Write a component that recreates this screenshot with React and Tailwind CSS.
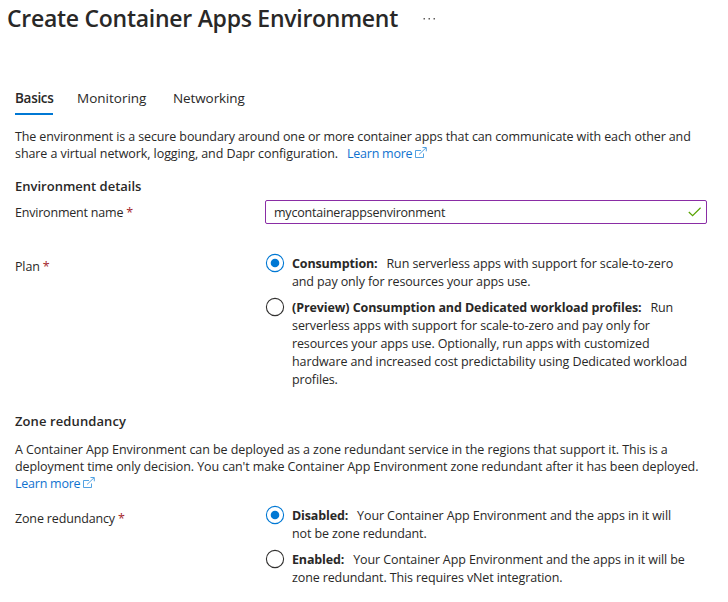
function Lines({ items }) {
  return items.map(([text, tracking]) => (
    <span key={text} className={`block whitespace-nowrap ${tracking}`}>
      {text}
    </span>
  ));
}

function ExternalIcon() {
  return (
    <svg width="12" height="12" viewBox="0 0 12 12" fill="none" stroke="#3f97de" strokeWidth="0.9" className="ml-[3px] inline-block align-[-1px]">
      <path d="M6 3.5H.5v7h8V6.5" />
      <path d="M4 7.5 11 .8M7.5.5h3.8v3.8" />
    </svg>
  );
}

function LearnMore() {
  return (
    <a className="whitespace-nowrap tracking-[-0.24px] text-[#0f72cf]">
      Learn more
      <ExternalIcon />
    </a>
  );
}

function Required({ children, tracking = "tracking-[-0.15px]" }) {
  return (
    <span className={`whitespace-nowrap ${tracking}`}>
      {children} <span className="text-[#a4262c]">*</span>
    </span>
  );
}

function Radio({ checked }) {
  return (
    <svg width="20" height="20" viewBox="0 0 20 20" className="shrink-0" fill="none">
      <circle cx="10" cy="10" r="8.6" stroke={checked ? "#0078d4" : "#323130"} strokeWidth="1.1" />
      {checked && <circle cx="10" cy="10" r="4.3" fill="#0078d4" />}
    </svg>
  );
}

function Option({ checked, title, titleTracking, first, firstTracking, rest = [] }) {
  return (
    <div className="flex gap-[7px]">
      <Radio checked={checked} />
      <div className="pt-0.5 leading-[18px]">
        <div className="whitespace-nowrap">
          <b className={`mr-[9px] font-bold ${titleTracking}`}>{title}</b>
          <span className={firstTracking}>{first}</span>
        </div>
        <Lines items={rest} />
      </div>
    </div>
  );
}

export default function App() {
  return (
    <main className="h-[602px] w-[728px] overflow-hidden bg-white font-['Open_Sans','Noto_Sans',sans-serif] text-[12.5px] text-[#292827]">
      <header className="flex h-9 items-center pl-[7px]">
        <h1 className="w-[418px] whitespace-nowrap text-[23px] font-semibold tracking-[-0.27px]">Create Container Apps Environment</h1>
        <svg width="13" height="3" viewBox="0 0 13 3" className="ml-[-2px]" fill="#605e5c">
          <rect x="0.5" y="1" width="1.5" height="1.5" />
          <rect x="5.5" y="1" width="1.5" height="1.5" />
          <rect x="10.5" y="1" width="1.5" height="1.5" />
        </svg>
      </header>

      <nav className="mt-[51px] flex h-7 pl-[15px] text-[13.5px] leading-[22px]">
        <span className="mr-6 w-[38px] whitespace-nowrap border-b-2 border-[#0078d4] font-semibold tracking-[-0.3px]">Basics</span>
        <span className="w-24">Monitoring</span>
        <span className="tracking-[-0.1px]">Networking</span>
      </nav>

      <section className="mt-[13px] pl-[15px] leading-[17px]">
        <p className="whitespace-nowrap tracking-[-0.12px]">The environment is a secure boundary around one or more container apps that can communicate with each other and</p>
        <p className="flex whitespace-nowrap">
          <span className="w-[332px] tracking-[-0.08px]">share a virtual network, logging, and Dapr configuration.</span>
          <LearnMore />
        </p>
      </section>

      <section className="mt-[15px] pl-[15px]">
        <h2 className="text-[13px] font-semibold leading-[18px]">Environment details</h2>
        <div className="mt-[5px] flex items-center">
          <div className="w-[250px] pt-0.5">
            <Required tracking="tracking-[-0.2px]">Environment name</Required>
          </div>
          <div className="flex h-6 w-[442px] items-center justify-between rounded-[2px] border border-[#8a2da5] pl-2 pr-[5px]">
            <span className="pt-0.5 tracking-[-0.21px]">mycontainerappsenvironment</span>
            <svg width="13" height="10" viewBox="0 0 13 10" fill="none" stroke="#57a300" strokeWidth="1.2">
              <path d="M.8 5 4.6 8.7 12.6.8" />
            </svg>
          </div>
        </div>
        <div className="mt-[29px] flex">
          <div className="w-[250px] pt-[5px] leading-[18px]">
            <Required>Plan</Required>
          </div>
          <div className="flex flex-col gap-[6px]">
            <Option
              checked
              title="Consumption:"
              titleTracking="tracking-[-0.15px]"
              first="Run serverless apps with support for scale-to-zero"
              firstTracking="tracking-[-0.1px]"
              rest={[["and pay only for resources your apps use.", "tracking-[-0.12px]"]]}
            />
            <Option
              title="(Preview) Consumption and Dedicated workload profiles:"
              titleTracking="tracking-[-0.1px]"
              first="Run"
              firstTracking="tracking-[-0.2px]"
              rest={[
                ["serverless apps with support for scale-to-zero and pay only for", "tracking-[-0.08px]"],
                ["resources your apps use. Optionally, run apps with customized", "tracking-[-0.13px]"],
                ["hardware and increased cost predictability using Dedicated workload", "tracking-[-0.1px]"],
                ["profiles.", "tracking-[-0.15px]"],
              ]}
            />
          </div>
        </div>
      </section>

      <section className="mt-[23px] pl-[15px]">
        <h2 className="text-[13px] font-semibold leading-[18px] tracking-[0.1px]">Zone redundancy</h2>
        <div className="mt-[11px] leading-[17px]">
          <Lines
            items={[
              ["A Container App Environment can be deployed as a zone redundant service in the regions that support it. This is a", "tracking-[-0.075px]"],
              ["deployment time only decision. You can't make Container App Environment zone redundant after it has been deployed.", "tracking-[-0.095px]"],
            ]}
          />
          <LearnMore />
        </div>
        <div className="mt-[13px] flex">
          <div className="w-[250px] pt-[5px] leading-[18px]">
            <Required>Zone redundancy</Required>
          </div>
          <div className="flex flex-col gap-[6px]">
            <Option
              checked
              title="Disabled:"
              titleTracking="tracking-[-0.15px]"
              first="Your Container App Environment and the apps in it will"
              firstTracking="tracking-[-0.1px]"
              rest={[["not be zone redundant.", "tracking-[-0.12px]"]]}
            />
            <Option
              title="Enabled:"
              titleTracking="tracking-[-0.15px]"
              first="Your Container App Environment and the apps in it will be"
              firstTracking="tracking-[-0.1px]"
              rest={[["zone redundant. This requires vNet integration.", "tracking-[-0.12px]"]]}
            />
          </div>
        </div>
      </section>
    </main>
  );
}
